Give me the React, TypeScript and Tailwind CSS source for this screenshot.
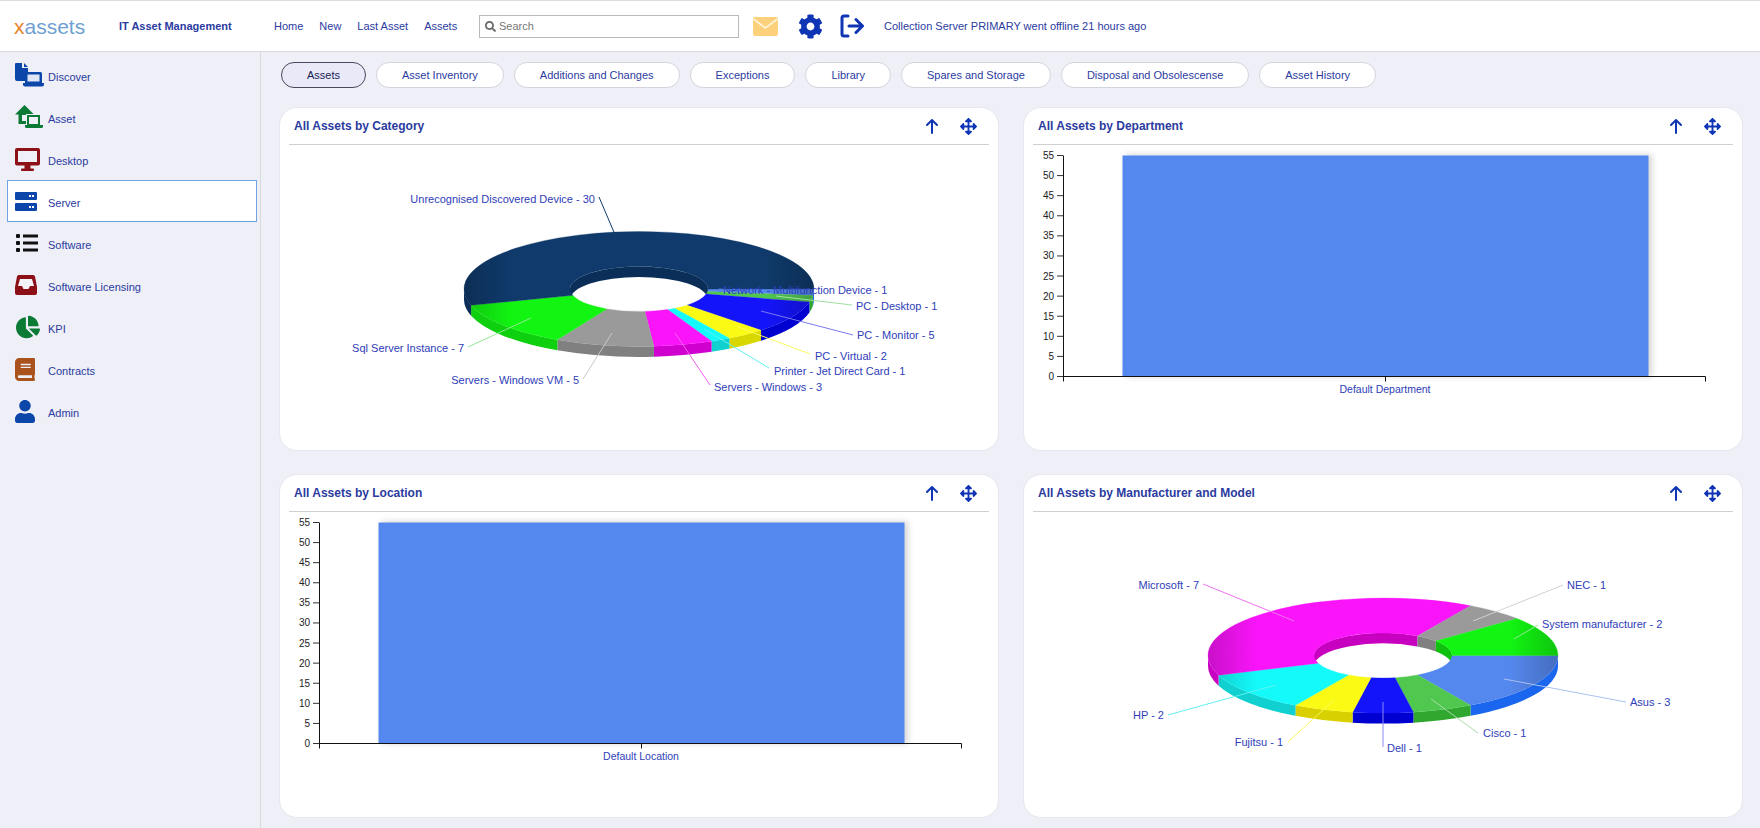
import React from 'react';
import { FaArrowsAlt, FaBook, FaChartPie, FaCog, FaSearch, FaUser } from 'react-icons/fa';

// Types
type Slice = { from: number; to: number; top: string; wall: string };
type Leader = { text: string; x: number; y: number; anchor?: 'start' | 'end' | 'middle'; line: number[]; color: string };

const LABEL = '#2e3db8';

const categorySlices: Slice[] = [
  { from: 0, to: 6.5, top: '#5588ee', wall: '#1a66ee' },
  { from: 6.5, to: 13.1, top: '#50c850', wall: '#30a830' },
  { from: 13.1, to: 45.8, top: '#1414fa', wall: '#0000d0' },
  { from: 45.8, to: 58.9, top: '#fafa14', wall: '#d8d800' },
  { from: 58.9, to: 65.5, top: '#14fafa', wall: '#10d0d0' },
  { from: 65.5, to: 85.1, top: '#fa14fa', wall: '#d000cf' },
  { from: 85.1, to: 117.8, top: '#9a9a9a', wall: '#808080' },
  { from: 117.8, to: 163.6, top: '#12f512', wall: '#0fd00f' },
  { from: 163.6, to: 360, top: '#0f3a6b', wall: '#0a2e58' }
];

const categoryLabels: Leader[] = [
  { text: 'Unrecognised Discovered Device - 30', x: 595, y: 200, anchor: 'end', line: [599, 198, 619, 245], color: '#0f3a6b' },
  { text: 'Network - Multifunction Device - 1', x: 723, y: 291, line: [719, 290, 745, 292], color: '#5588ee' },
  { text: 'PC - Desktop - 1', x: 856, y: 307, line: [852, 306, 776, 297], color: '#a0e0a0' },
  { text: 'PC - Monitor - 5', x: 857, y: 336, line: [853, 336, 761, 312], color: '#7a7af0' },
  { text: 'PC - Virtual - 2', x: 815, y: 357, line: [810, 355, 738, 328], color: '#fafa60' },
  { text: 'Printer - Jet Direct Card - 1', x: 774, y: 372, line: [769, 369, 704, 330], color: '#60f0f0' },
  { text: 'Servers - Windows - 3', x: 714, y: 388, line: [710, 386, 675, 334], color: '#f060f0' },
  { text: 'Servers - Windows VM - 5', x: 579, y: 381, anchor: 'end', line: [583, 380, 612, 334], color: '#c8c8c8' },
  { text: 'Sql Server Instance - 7', x: 464, y: 349, anchor: 'end', line: [468, 348, 531, 319], color: '#90e890' }
];

const makerSlices: Slice[] = [
  { from: 0, to: 60, top: '#5588ee', wall: '#1a66ee' },
  { from: 60, to: 80, top: '#50c850', wall: '#30a830' },
  { from: 80, to: 100, top: '#1414fa', wall: '#0000d0' },
  { from: 100, to: 120, top: '#fafa14', wall: '#d8d000' },
  { from: 120, to: 160, top: '#14fafa', wall: '#10d0d0' },
  { from: 160, to: 300, top: '#fa14fa', wall: '#c800c0' },
  { from: 300, to: 320, top: '#9a9a9a', wall: '#808080' },
  { from: 320, to: 360, top: '#12f512', wall: '#0fc00f' }
];

const makerLabels: Leader[] = [
  { text: 'Microsoft - 7', x: 1199, y: 585, anchor: 'end', line: [1203, 584, 1294, 621], color: '#f070f0' },
  { text: 'NEC - 1', x: 1567, y: 585, line: [1563, 585, 1473, 621], color: '#d0d0d0' },
  { text: 'System manufacturer - 2', x: 1542, y: 624, line: [1538, 625, 1514, 639], color: '#90e890' },
  { text: 'Asus - 3', x: 1630, y: 702, line: [1626, 702, 1504, 679], color: '#a8c0f0' },
  { text: 'Cisco - 1', x: 1483, y: 733, line: [1478, 733, 1431, 699], color: '#a8dca8' },
  { text: 'Dell - 1', x: 1387, y: 748, line: [1383, 747, 1383, 702], color: '#8a8af5' },
  { text: 'Fujitsu - 1', x: 1283, y: 742, anchor: 'end', line: [1288, 742, 1334, 700], color: '#fafa60' },
  { text: 'HP - 2', x: 1164, y: 715, anchor: 'end', line: [1168, 715, 1276, 685], color: '#60f0f0' }
];

const ticks = [55, 50, 45, 40, 35, 30, 25, 20, 15, 10, 5, 0];

// Ring segment geometry, angles run clockwise from 3 o'clock
const pt = (cx: number, cy: number, rx: number, ry: number, deg: number) => {
  const r = (deg * Math.PI) / 180;
  return `${(cx + rx * Math.cos(r)).toFixed(2)} ${(cy + ry * Math.sin(r)).toFixed(2)}`;
};

const arc = (rx: number, ry: number, a: number, b: number, sweep: number, end: string) =>
  `A ${rx} ${ry} 0 ${Math.abs(b - a) > 180 ? 1 : 0} ${sweep} ${end}`;

const Donut = ({ id, cx, cy, slices }: { id: string; cx: number; cy: number; slices: Slice[] }) => {
  const rx = 175;
  const ry = 57.5;
  const irx = 69;
  const iry = 22.5;
  const d = 10.5;

  const band = (a: number, b: number, r1: number, r2: number) =>
    `M ${pt(cx, cy, r1, r2, a)} ${arc(r1, r2, a, b, 1, pt(cx, cy, r1, r2, b))} L ${pt(cx, cy + d, r1, r2, b)} ${arc(r1, r2, a, b, 0, pt(cx, cy + d, r1, r2, a))} Z`;

  const top = (a: number, b: number) =>
    `M ${pt(cx, cy, rx, ry, a)} ${arc(rx, ry, a, b, 1, pt(cx, cy, rx, ry, b))} L ${pt(cx, cy, irx, iry, b)} ${arc(irx, iry, a, b, 0, pt(cx, cy, irx, iry, a))} Z`;

  return (
    <g>
      <defs>
        <linearGradient id={id} gradientUnits="userSpaceOnUse" x1={cx - rx} x2={cx + rx} y1="0" y2="0">
          <stop offset="0" stopColor="#000" stopOpacity="0.2" />
          <stop offset="0.14" stopColor="#000" stopOpacity="0" />
          <stop offset="0.86" stopColor="#000" stopOpacity="0" />
          <stop offset="1" stopColor="#000" stopOpacity="0.2" />
        </linearGradient>
      </defs>
      {slices.map((s) =>
        s.from < 180 ? <path key={`o${s.from}`} d={band(s.from, Math.min(s.to, 180), rx, ry)} fill={s.wall} /> : null
      )}
      {slices.map((s) =>
        s.to > 180 ? <path key={`i${s.from}`} d={band(Math.max(s.from, 180), s.to, irx, iry)} fill={s.wall} /> : null
      )}
      {slices.map((s) => (
        <path key={`t${s.from}`} d={top(s.from, s.to)} fill={s.top} stroke={s.top} strokeWidth="0.3" />
      ))}
      <path d={top(0, 180)} fill={`url(#${id})`} />
      <path d={top(180, 360)} fill={`url(#${id})`} />
    </g>
  );
};

const PieChart = ({ id, box, cx, cy, slices, labels }: { id: string; box: string; cx: number; cy: number; slices: Slice[]; labels: Leader[] }) => (
  <svg viewBox={box} className="h-[306px] w-[718px]">
    <Donut id={id} cx={cx} cy={cy} slices={slices} />
    {labels.map((l) => (
      <g key={l.text}>
        <line x1={l.line[0]} y1={l.line[1]} x2={l.line[2]} y2={l.line[3]} stroke={l.color} strokeWidth="1" />
        <text x={l.x} y={l.y + 3.5} textAnchor={l.anchor ?? 'start'} fontSize="11" fill={LABEL}>
          {l.text}
        </text>
      </g>
    ))}
  </svg>
);

// Bar chart is drawn relative to the card body
const BarChart = ({ label, id }: { label: string; id: string }) => {
  const top = 10.5;
  const bottom = 231.5;
  const step = (bottom - top) / 11;
  return (
    <svg viewBox="0 0 718 306" className="h-[306px] w-[718px]">
      <defs>
        <filter id={id} x="-3%" y="-3%" width="106%" height="106%">
          <feGaussianBlur stdDeviation="3" />
        </filter>
      </defs>
      <rect x="102" y={top - 1} width="526" height={bottom - top + 1} fill="#000" opacity="0.16" filter={`url(#${id})`} />
      <rect x="98.5" y={top} width="526" height={bottom - top} fill="#5588ee" />
      <line x1="39.5" y1={top} x2="39.5" y2={bottom + 5} stroke="#111" />
      <line x1="39" y1={bottom} x2="681.5" y2={bottom} stroke="#111" />
      <line x1="361.5" y1={bottom} x2="361.5" y2={bottom + 5} stroke="#111" />
      <line x1="681.5" y1={bottom} x2="681.5" y2={bottom + 5} stroke="#111" />
      {ticks.map((t, i) => (
        <g key={t}>
          <line x1="33" y1={top + i * step} x2="39" y2={top + i * step} stroke="#333" />
          <text x="30" y={top + i * step + 3.5} textAnchor="end" fontSize="10" fill="#222">
            {t}
          </text>
        </g>
      ))}
      <text x="361" y={bottom + 16} textAnchor="middle" fontSize="10.5" fill={LABEL}>
        {label}
      </text>
    </svg>
  );
};

const ArrowUpIcon = () => (
  <svg viewBox="0 0 14 16" className="h-[16px] w-[14px]" fill="none" stroke="#0f35b5" strokeWidth="2" strokeLinecap="round" strokeLinejoin="round">
    <path d="M7 15V2M2 7l5-5 5 5" />
  </svg>
);

const DashCard = ({ title, children }: { title: string; children: React.ReactNode }) => (
  <div className="h-[344px] overflow-hidden rounded-[18px] border border-[#e6e7ef] bg-white">
    <div className="mx-[9px] flex h-[37px] items-center justify-between border-b border-[#cfcfd4] pl-[5px] pr-[12px]">
      <span className="text-[12px] font-bold text-[#2b3b9f]">{title}</span>
      <div className="flex items-center gap-[21px] text-[#0f35b5]">
        <ArrowUpIcon />
        <FaArrowsAlt className="h-[17px] w-[17px]" />
      </div>
    </div>
    {children}
  </div>
);

const DiscoverIcon = () => (
  <svg viewBox="0 0 30 24" className="h-[24px] w-[30px]">
    <path d="M0 1a1 1 0 0 1 1-1h6v5h6v13H2a2 2 0 0 1-2-2z" fill="#0b46a8" />
    <path d="M9 0l4 4H9z" fill="#0b46a8" />
    <rect x="10" y="9" width="17" height="12" rx="1.5" fill="#0b46a8" />
    <rect x="12.5" y="11.5" width="12" height="7" fill="#dfe6f5" />
    <path d="M8 20h21v1.5a2 2 0 0 1-2 2H10a2 2 0 0 1-2-2z" fill="#0b46a8" />
  </svg>
);

const AssetIcon = () => (
  <svg viewBox="0 0 30 24" className="h-[24px] w-[30px]">
    <path d="M0 9.500L9.500 0 19 9.500h-3.500V19H3.500V9.500z" fill="#0a7a35" />
    <rect x="7" y="10" width="4" height="6" fill="#eeeff7" />
    <rect x="11" y="9" width="15" height="12" fill="#eeeff7" />
    <rect x="13" y="11" width="11" height="9" fill="none" stroke="#0a7a35" strokeWidth="2" />
    <path d="M10 20h18v1.500a1.500 1.500 0 0 1-1.500 1.500h-15a1.500 1.500 0 0 1-1.500-1.500z" fill="#0a7a35" />
  </svg>
);

const DesktopIcon = () => (
  <svg viewBox="0 0 25 23" className="h-[23px] w-[25px]">
    <rect width="25" height="17.5" rx="2" fill="#8c1016" />
    <rect x="3" y="3" width="19" height="11" fill="#eeeff7" />
    <rect x="9.5" y="17" width="6" height="4" fill="#8c1016" />
    <rect x="6" y="20.5" width="13" height="2.5" rx="1" fill="#8c1016" />
  </svg>
);

const ServerIcon = () => (
  <svg viewBox="0 0 22 19" className="h-[19px] w-[22px]">
    <rect x="0" y="0" width="22" height="8" rx="1" fill="#0b46a8" />
    <rect x="0" y="11" width="22" height="8" rx="1" fill="#0b46a8" />
    <rect x="14" y="3" width="2" height="2" fill="#fff" />
    <rect x="17" y="3" width="2" height="2" fill="#fff" />
    <rect x="14" y="14" width="2" height="2" fill="#fff" />
    <rect x="17" y="14" width="2" height="2" fill="#fff" />
  </svg>
);

const ListIcon = () => (
  <svg viewBox="0 0 22 18" className="ml-[1px] h-[18px] w-[22px]" fill="#111">
    <rect x="0" y="0" width="4" height="4" rx="1" />
    <rect x="0" y="7" width="4" height="4" rx="1" />
    <rect x="0" y="14" width="4" height="4" rx="1" />
    <rect x="7" y="0.5" width="15" height="3" />
    <rect x="7" y="7.5" width="15" height="3" />
    <rect x="7" y="14.5" width="15" height="3" />
  </svg>
);

const InboxIcon = () => (
  <svg viewBox="0 0 22 20" className="h-[20px] w-[22px]">
    <path d="M4 0h14a2 2 0 0 1 2 1.500L22 12v6a2 2 0 0 1-2 2H2a2 2 0 0 1-2-2v-6L2 1.500A2 2 0 0 1 4 0z" fill="#8c1016" />
    <path d="M5 4h12l2 7h-4l-1.500 3h-5L7 11H3z" fill="#f4f4f8" />
  </svg>
);

const MailIcon = () => (
  <svg viewBox="0 0 25 19" className="h-[19px] w-[25px]">
    <rect width="25" height="19" rx="2" fill="#fdd07c" />
    <path d="M0.5 2l12 9 12-9" fill="none" stroke="#fff3d8" strokeWidth="1.6" />
  </svg>
);

const LogoutIcon = () => (
  <svg viewBox="0 0 24 24" className="h-[24px] w-[24px]" fill="none" stroke="#0f35b5" strokeWidth="3" strokeLinecap="round" strokeLinejoin="round">
    <path d="M8 2H4a2 2 0 0 0-2 2v16a2 2 0 0 0 2 2h4M9 12h13M16 5.500l6.500 6.500-6.500 6.500" />
  </svg>
);

const navItems = [
  { name: 'Discover', icon: <DiscoverIcon /> },
  { name: 'Asset', icon: <AssetIcon /> },
  { name: 'Desktop', icon: <DesktopIcon /> },
  { name: 'Server', icon: <ServerIcon />, active: true },
  { name: 'Software', icon: <ListIcon /> },
  { name: 'Software Licensing', icon: <InboxIcon /> },
  { name: 'KPI', icon: <FaChartPie className="ml-[1px] h-[24px] w-[24px] text-[#0a7a35]" /> },
  { name: 'Contracts', icon: <FaBook className="h-[23px] w-[20px] text-[#a9521c]" /> },
  { name: 'Admin', icon: <FaUser className="h-[23px] w-[20px] text-[#0b46a8]" /> }
];

const tabs = ['Assets', 'Asset Inventory', 'Additions and Changes', 'Exceptions', 'Library', 'Spares and Storage', 'Disposal and Obsolescense', 'Asset History'];

const topLinks = ['Home', 'New', 'Last Asset', 'Assets'];

export default function App() {
  return (
    <div className="flex h-[828px] w-[1760px] flex-col overflow-hidden bg-[#eeeff7] font-['Liberation_Sans',Arial,sans-serif]">
      {/* Header */}
      <header className="flex h-[52px] items-center border-y border-t-[#dddddd] border-b-[#dcdce0] bg-white">
        <span className="ml-[14px] w-[105px] text-[21px] leading-none text-[#6f9fd2]">
          <span className="text-[#e8822a]">x</span>assets
        </span>
        <span className="w-[155px] text-[11px] font-bold text-[#2b3b9f]">IT Asset Management</span>
        <nav className="flex w-[205px] gap-[16px] text-[11px] text-[#2b3b9f]">
          {topLinks.map((link) => (
            <span key={link}>{link}</span>
          ))}
        </nav>
        <div className="flex h-[23px] w-[260px] items-center gap-[3px] border border-[#b9b9b9] bg-white pl-[5px] text-[11px] text-[#777]">
          <FaSearch className="h-[11px] w-[11px] text-[#666]" />
          Search
        </div>
        <div className="ml-[14px] flex items-center">
          <MailIcon />
          <FaCog className="ml-[20px] h-[25px] w-[25px] text-[#0f35b5]" />
          <span className="ml-[17px]">
            <LogoutIcon />
          </span>
        </div>
        <span className="ml-[20px] text-[11px] text-[#2b3b9f]">Collection Server PRIMARY went offline 21 hours ago</span>
      </header>

      <div className="flex flex-1">
        {/* Sidebar */}
        <aside className="w-[261px] shrink-0 border-r border-[#d9d9de] pl-[7px] pr-[3px] pt-[2px]">
          {navItems.map((item) => (
            <div
              key={item.name}
              className={
                item.active
                  ? 'flex h-[42px] items-center border border-[#6ea4e4] bg-white pl-[7px] text-[11px] text-[#2b3b9f]'
                  : 'flex h-[42px] items-center border border-transparent pl-[7px] text-[11px] text-[#2b3b9f]'
              }
            >
              <span className="flex w-[33px] shrink-0 items-center">{item.icon}</span>
              <span className="pt-[5px]">{item.name}</span>
            </div>
          ))}
        </aside>

        {/* Main */}
        <main className="flex-1 pl-[18px] pr-[17px]">
          <div className="ml-[2px] mt-[10px] flex gap-[10px]">
            {tabs.map((tab, i) => (
              <div
                key={tab}
                className={
                  i === 0
                    ? 'flex h-[26px] items-center rounded-full border border-[#444a5c] bg-[#e9e9f8] px-[25px] pt-[1px] text-[11px] text-[#1a2258]'
                    : 'flex h-[26px] items-center rounded-full border border-[#d4d5dc] bg-white px-[25px] pt-[1px] text-[11px] text-[#2b3b9f]'
                }
              >
                {tab}
              </div>
            ))}
          </div>
          <div className="mt-[19px] grid grid-cols-2 gap-x-[24px] gap-y-[23px]">
            <DashCard title="All Assets by Category">
              <PieChart id="pie-category" box="280 146 718 306" cx={639} cy={290} slices={categorySlices} labels={categoryLabels} />
            </DashCard>
            <DashCard title="All Assets by Department">
              <BarChart label="Default Department" id="shadow-dept" />
            </DashCard>
            <DashCard title="All Assets by Location">
              <BarChart label="Default Location" id="shadow-loc" />
            </DashCard>
            <DashCard title="All Assets by Manufacturer and Model">
              <PieChart id="pie-maker" box="1024 512 718 306" cx={1383} cy={655.5} slices={makerSlices} labels={makerLabels} />
            </DashCard>
          </div>
        </main>
      </div>
    </div>
  );
}
